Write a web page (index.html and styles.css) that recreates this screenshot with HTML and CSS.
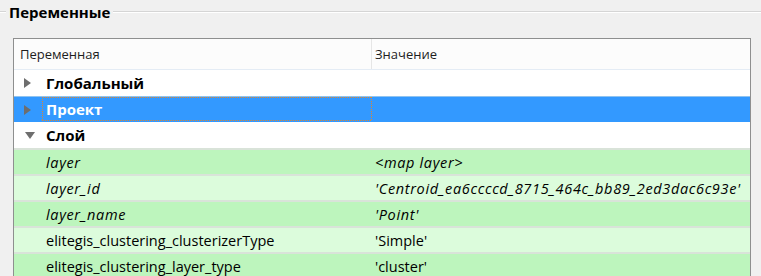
FILE: index.html
```html
<!DOCTYPE html>
<html lang="ru">
<head>
  <meta charset="UTF-8">
  <title>Переменные</title>
  <link rel="stylesheet" href="styles.css">
</head>
<body>

  <div class="group-title">
    <span class="line-start"></span>
    <span class="title">Переменные</span>
    <span class="line-end"></span>
  </div>

  <div class="tree">
    <div class="row header">
      <div class="cell name">Переменная</div>
      <div class="cell value">Значение</div>
    </div>

    <div class="row scope">
      <div class="cell name"><span class="arrow right"></span><span class="label">Глобальный</span></div>
      <div class="cell value"></div>
    </div>

    <div class="row scope selected">
      <div class="cell name"><span class="arrow right"></span><span class="label focus">Проект</span></div>
      <div class="cell value"></div>
    </div>

    <div class="row scope">
      <div class="cell name"><span class="arrow down"></span><span class="label">Слой</span></div>
      <div class="cell value"></div>
    </div>

    <!-- переменные слоя -->
    <div class="row var dark">
      <div class="cell name italic">layer</div>
      <div class="cell value italic">&lt;map layer&gt;</div>
    </div>
    <div class="row var light">
      <div class="cell name italic">layer_id</div>
      <div class="cell value italic">'Centroid_ea6ccccd_8715_464c_bb89_2ed3dac6c93e'</div>
    </div>
    <div class="row var dark">
      <div class="cell name italic">layer_name</div>
      <div class="cell value italic">'Point'</div>
    </div>
    <div class="row var light">
      <div class="cell name">elitegis_clustering_clusterizerType</div>
      <div class="cell value">'Simple'</div>
    </div>
    <div class="row var dark">
      <div class="cell name">elitegis_clustering_layer_type</div>
      <div class="cell value">'cluster'</div>
    </div>
    <div class="row var light">
      <div class="cell name"></div>
      <div class="cell value"></div>
    </div>
  </div>

</body>
</html>
```

FILE: styles.css
```css
* {
  box-sizing: border-box;
}
html, body {
  height: 100%;
}
body {
  margin: 0;
  overflow: hidden;
  background-color: #f0f0f0;
  font-family: "Open Sans", "Liberation Sans", sans-serif;
  font-size: 14.5px;
  color: #000;
}
.group-title {
  display: flex;
  align-items: center;
  height: 24px;
}
.line-start {
  width: 6px;
  border-top: 1px solid #d5d5d5;
  border-bottom: 1px solid #fff;
}
.line-end {
  flex: 1;
  border-top: 1px solid #d5d5d5;
  border-bottom: 1px solid #fff;
}
.title {
  font-weight: bold;
  font-size: 15px;
  padding: 0 3px;
}
.tree {
  margin: 14px 10px 0 13px;
  border: 1px solid #8e8f8f;
  background-color: #fff;
}
.row {
  display: flex;
  height: 26px;
  align-items: stretch;
}
.cell {
  display: flex;
  align-items: center;
  white-space: nowrap;
  overflow: hidden;
}
.cell.name {
  width: 358px;
  flex: none;
  padding-left: 32px;
}
.cell.value {
  flex: 1;
  padding-left: 3px;
}
.header {
  height: 31px;
  background-color: #fcfcfc;
  border-bottom: 1px solid #e4ecf5;
  color: #1e1e1e;
  font-size: 13px;
}
.header .cell.name {
  padding-left: 6px;
  border-right: 1px solid #e6e6e6;
}
.scope {
  font-weight: bold;
  font-size: 15px;
}
.scope .cell.name {
  padding-left: 10px;
}
.selected {
  background-color: #3399ff;
  border-top: 1px solid #8fc3f0;
  color: #fff;
}
.label {
  display: flex;
  align-items: center;
  align-self: stretch;
  flex: 1;
  margin: 1px 0;
  padding-left: 4px;
}
.selected .label {
  margin-top: 0;
}
/* пунктирная рамка фокуса */
.focus {
  background:
    repeating-linear-gradient(90deg, #e0862e 0 1px, transparent 1px 2px) left top / 100% 1px no-repeat,
    repeating-linear-gradient(90deg, #e0862e 0 1px, transparent 1px 2px) left bottom / 100% 1px no-repeat,
    repeating-linear-gradient(180deg, #e0862e 0 1px, transparent 1px 2px) left top / 1px 100% no-repeat,
    repeating-linear-gradient(180deg, #e0862e 0 1px, transparent 1px 2px) right top / 1px 100% no-repeat;
}
.arrow {
  width: 0;
  height: 0;
  flex: none;
}
.arrow.right {
  border-top: 5px solid transparent;
  border-bottom: 5px solid transparent;
  border-left: 7px solid #6e6e6e;
  margin-right: 11px;
}
.arrow.down {
  border-left: 5px solid transparent;
  border-right: 5px solid transparent;
  border-top: 7px solid #6e6e6e;
  margin-left: 1px;
  margin-right: 7px;
}
.var {
  border-top: 2px solid #d9e3d9;
}
.dark {
  background-color: #bdf5bd;
}
.light {
  background-color: #dcfcdc;
}
.italic {
  font-style: italic;
  letter-spacing: 0.65px;
}
```
